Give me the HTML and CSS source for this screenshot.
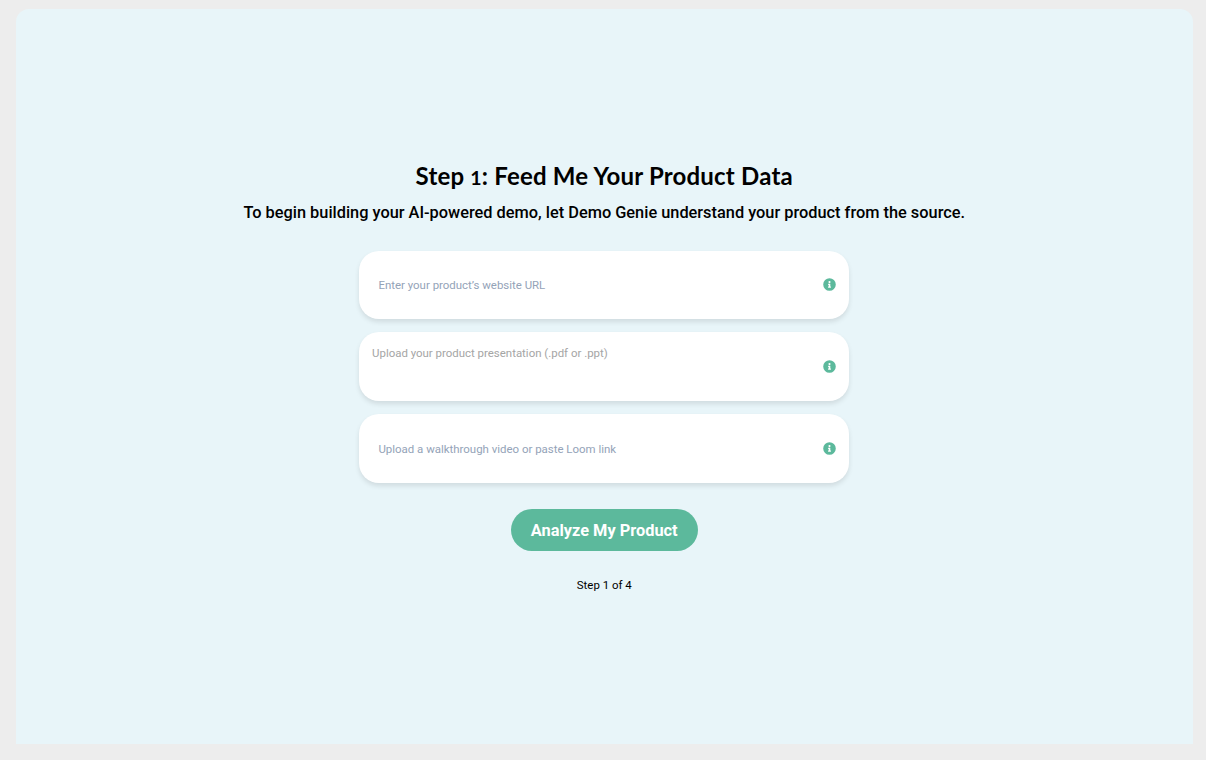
FILE: index.html
```html
<!DOCTYPE html>
<html lang="en">
<head>
<meta charset="utf-8">
<title>Demo Genie</title>
<link rel="stylesheet" href="styles.css">
</head>
<body>
<main class="panel">
  <h1 class="title">Step <span class="numeral">1</span>: Feed Me Your Product Data</h1>
  <p class="subtitle">To begin building your AI-powered demo, let Demo Genie understand your product from the source.</p>
  <div class="fields">
    <div class="field"><span class="hint">Enter your product’s website URL</span>
      <svg class="info" viewBox="0 0 512 512"><path fill="#5cb99c" d="M256 8a248 248 0 1 0 0 496 248 248 0 1 0 0-496zm0 110a42 42 0 1 1 0 84 42 42 0 1 1 0-84zm56 254c0 7-5 12-12 12h-88c-7 0-12-5-12-12v-24c0-7 5-12 12-12h12v-64h-12c-7 0-12-5-12-12v-24c0-7 5-12 12-12h64c7 0 12 5 12 12v100h12c7 0 12 5 12 12z"/></svg></div>
    <div class="field upload"><span class="hint">Upload your product presentation (.pdf or .ppt)</span>
      <svg class="info" viewBox="0 0 512 512"><path fill="#5cb99c" d="M256 8a248 248 0 1 0 0 496 248 248 0 1 0 0-496zm0 110a42 42 0 1 1 0 84 42 42 0 1 1 0-84zm56 254c0 7-5 12-12 12h-88c-7 0-12-5-12-12v-24c0-7 5-12 12-12h12v-64h-12c-7 0-12-5-12-12v-24c0-7 5-12 12-12h64c7 0 12 5 12 12v100h12c7 0 12 5 12 12z"/></svg></div>
    <div class="field video"><span class="hint">Upload a walkthrough video or paste Loom link</span>
      <svg class="info" viewBox="0 0 512 512"><path fill="#5cb99c" d="M256 8a248 248 0 1 0 0 496 248 248 0 1 0 0-496zm0 110a42 42 0 1 1 0 84 42 42 0 1 1 0-84zm56 254c0 7-5 12-12 12h-88c-7 0-12-5-12-12v-24c0-7 5-12 12-12h12v-64h-12c-7 0-12-5-12-12v-24c0-7 5-12 12-12h64c7 0 12 5 12 12v100h12c7 0 12 5 12 12z"/></svg></div>
  </div>
  <button class="analyze">Analyze My Product</button>
  <p class="progress">Step 1 of 4</p>
</main>
</body>
</html>
```
FILE: styles.css
```css
* { box-sizing: border-box; }
body { margin: 0; height: 760px; padding: 9px 13px 16px 15.5px; background: #ededed; font-family: Roboto, sans-serif; color: #000; overflow: hidden; }
.panel { height: 735px; padding-top: 150px; background: #e8f5f9; border-radius: 13px 13px 0 0; display: flex; flex-direction: column; align-items: center; }
.title { margin: 0; font: 700 24px/34px Lato, sans-serif; letter-spacing: .2px; white-space: nowrap; }
.numeral { font-size: 19.5px; line-height: 1; }
.subtitle { margin: 8px 0 0; font-size: 16.35px; line-height: 24px; font-weight: 500; white-space: nowrap; }
.fields { width: 490.4px; margin-top: 25.5px; display: grid; gap: 13px; }
.field { height: 68.7px; padding: 0 13.5px 0 19.4px; border-radius: 20px; background: #fff; box-shadow: 0 3px 5px rgba(0,0,0,.1); display: flex; align-items: center; justify-content: space-between; }
.hint { font-size: 11.45px; line-height: 18px; color: #94a3b8; }
.upload { padding-left: 13px; }
.upload .hint { align-self: flex-start; margin-top: 12px; color: #a5a5a5; }
.video .hint { margin-top: 1px; }
.info { width: 13px; height: 13px; }
.analyze { width: 186.5px; height: 42.7px; margin: 26px 0 0; padding: 2px 0 0; border: 0; border-radius: 22px; background: #5cb99c; color: #fff; font: 700 16.35px/24px Roboto, sans-serif; }
.progress { margin: 23.3px 0 0; font-size: 11.45px; line-height: 20px; }
```
